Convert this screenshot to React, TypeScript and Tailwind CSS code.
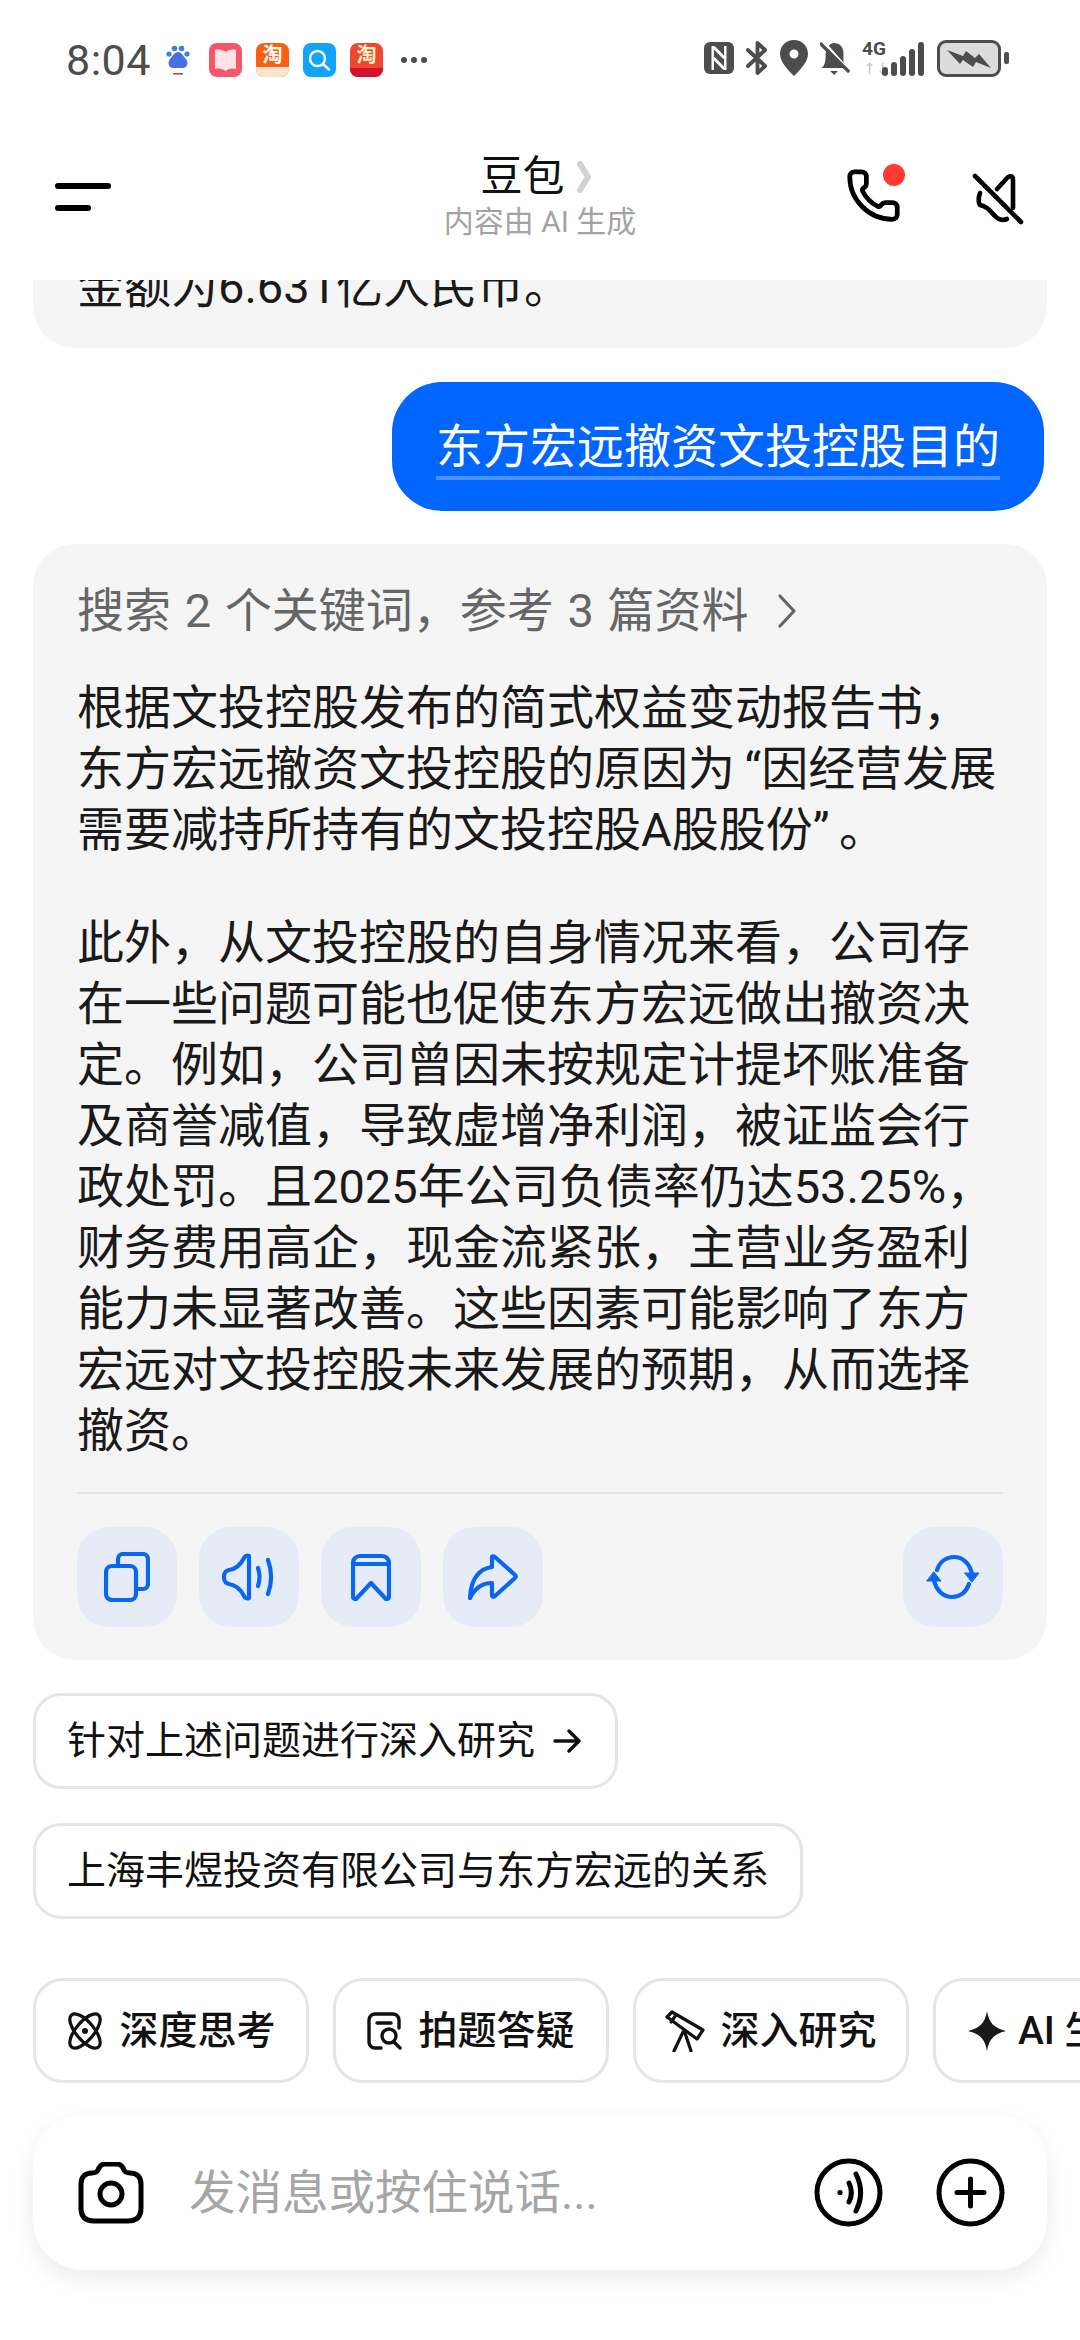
import { Phone } from "lucide-react";

const lines1 = [
	"根据文投控股发布的简式权益变动报告书，",
	"东方宏远撤资文投控股的原因为\u2009“因经营发展",
	"需要减持所持有的文投控股A股股份”\u2009。",
];

const lines2 = [
	"此外，从文投控股的自身情况来看，公司存",
	"在一些问题可能也促使东方宏远做出撤资决",
	"定。例如，公司曾因未按规定计提坏账准备",
	"及商誉减值，导致虚增净利润，被证监会行",
	"政处罚。且2025年公司负债率仍达53.25%，",
	"财务费用高企，现金流紧张，主营业务盈利",
	"能力未显著改善。这些因素可能影响了东方",
	"宏远对文投控股未来发展的预期，从而选择",
	"撤资。",
];

function StatusBar() {
	return (
		<div className="h-[120px] shrink-0 flex items-start justify-between pl-[66px] pr-[71px] pt-[38px] text-[#4d4d4d]">
			<div className="flex items-center h-[44px]">
				<span className="text-[43px] leading-[44px] tracking-[0.5px] font-normal">8:04</span>
				<svg width="24" height="30" viewBox="0 0 24 30" className="ml-[15px]">
					<circle cx="3" cy="9" r="2.6" fill="#3b7de8" />
					<circle cx="8.5" cy="3.5" r="2.8" fill="#3b7de8" />
					<circle cx="15.5" cy="3.5" r="2.8" fill="#3b7de8" />
					<circle cx="21" cy="9" r="2.6" fill="#3b7de8" />
					<path d="M12 7c4 0 5 4 8 7 3 4 1 9-3 9H7c-4 0-6-5-3-9 3-3 4-7 8-7z" fill="#4a6fe0" />
					<rect x="7" y="28" width="10" height="1.6" fill="#c0455a" />
				</svg>
				<div className="ml-[19px] w-[33px] h-[34px] rounded-[8px] bg-[#f4566a] flex items-center justify-center">
					<svg width="23" height="24" viewBox="0 0 23 24">
						<path d="M1 2c4-1 8 0 10.5 2C14 2 18 1 22 2v19c-4-1-8 0-10.5 2C9 21 5 20 1 21z" fill="#fde4e6" />
					</svg>
				</div>
				<div className="ml-[14px] w-[33px] h-[34px] rounded-[8px] bg-[#f9600f] overflow-hidden flex flex-col items-center">
					<span className="text-[20px] leading-[24px] font-bold text-white">淘</span>
					<div className="w-full flex-1 bg-[#fde3cf]" />
				</div>
				<div className="ml-[14px] w-[33px] h-[34px] rounded-[8px] bg-[#11a4fb] flex items-center justify-center">
					<svg width="24" height="24" viewBox="0 0 24 24" fill="none" stroke="#fff" strokeWidth="2.4">
						<circle cx="10.5" cy="10.5" r="7.5" />
						<path d="M16 16l6 5.5" strokeLinecap="round" />
					</svg>
				</div>
				<div className="ml-[14px] w-[33px] h-[34px] rounded-[8px] bg-[#f0482f] overflow-hidden flex flex-col items-center">
					<span className="text-[20px] leading-[25px] font-bold text-[#fff3c8]">淘</span>
					<div className="w-full flex-1 bg-[#d4122f]" />
				</div>
				<div className="ml-[18px] flex gap-[4px]">
					<div className="w-[6px] h-[6px] rounded-full bg-[#4d4d4d]" />
					<div className="w-[6px] h-[6px] rounded-full bg-[#4d4d4d]" />
					<div className="w-[6px] h-[6px] rounded-full bg-[#4d4d4d]" />
				</div>
			</div>
			<div className="flex items-center h-[44px] mt-[-2px]">
				<svg width="30" height="34" viewBox="0 0 31 34" preserveAspectRatio="none">
					<rect x="0" y="1" width="31" height="32" rx="6" fill="#4d4d4d" />
					<path d="M9 5v24M22 5v24" stroke="#fff" strokeWidth="2.5" />
					<path d="M10 6l11 11M10 17l11 11" stroke="#fff" strokeWidth="3" />
				</svg>
				<svg width="22" height="36" viewBox="0 0 23 36" fill="none" stroke="#4d4d4d" strokeWidth="4" preserveAspectRatio="none" className="ml-[12px]">
					<path d="M2 10l18 16-8 7V3l8 7L2 26" strokeLinejoin="round" strokeLinecap="round" />
				</svg>
				<svg width="28" height="36" viewBox="0 0 28 36" className="ml-[12px]">
					<path fillRule="evenodd" d="M14 0c8 0 14 6 14 14 0 8-8 16-14 22C8 30 0 22 0 14 0 6 6 0 14 0zm0 9.5a4.5 4.5 0 100 9 4.5 4.5 0 000-9z" fill="#4d4d4d" />
				</svg>
				<svg width="30" height="34" viewBox="0 0 32 34" preserveAspectRatio="none" className="ml-[12px]">
					<path d="M15 2c6 0 10 4 10 10v9l4 6H2c3-3 4-6 4-13 0-7 4-12 9-12z" fill="#4d4d4d" />
					<path d="M11 30h8l-4 4z" fill="#4d4d4d" />
					<path d="M3 0l27 29" stroke="#fff" strokeWidth="3" />
					<path d="M1 3l29 27" stroke="#4d4d4d" strokeWidth="3.5" strokeLinecap="round" />
				</svg>
				<div className="relative ml-[12px] w-[62px] h-[36px]">
					<span className="absolute left-0 top-[-1px] text-[19px] leading-[20px] font-bold">4G</span>
					<span className="absolute left-[1px] top-[22px] text-[13px] leading-[14px] text-[#c8c8c8] font-bold">↑↓</span>
					<div className="absolute right-0 bottom-0 flex items-end gap-[3px]">
						<div className="w-[6px] h-[9px] rounded-[3px] bg-[#4d4d4d]" />
						<div className="w-[6px] h-[14px] rounded-[3px] bg-[#4d4d4d]" />
						<div className="w-[6px] h-[20px] rounded-[3px] bg-[#4d4d4d]" />
						<div className="w-[6px] h-[27px] rounded-[3px] bg-[#4d4d4d]" />
						<div className="w-[6px] h-[34px] rounded-[3px] bg-[#4d4d4d]" />
					</div>
				</div>
				<div className="ml-[13px] w-[64px] h-[37px] rounded-[9px] border-[3px] border-[#4d4d4d] bg-[#dcdcdc] flex items-center justify-center">
					<svg width="46" height="22" viewBox="0 0 46 22">
						<path d="M1 3l16 6 3-5 9 7 4-4 12 14-15-6-3 5-10-7-3 4z" fill="#4d4d4d" />
					</svg>
				</div>
				<div className="ml-[3px] w-[5px] h-[12px] rounded-[2px] bg-[#4d4d4d]" />
			</div>
		</div>
	);
}

function NavBar() {
	return (
		<div className="relative h-[160px] shrink-0 flex items-start justify-between pl-[55px] pr-[56px]">
			<div className="pt-[63px] flex flex-col gap-[16px]">
				<div className="w-[56px] h-[6px] rounded-full bg-black" />
				<div className="w-[36px] h-[6px] rounded-full bg-black" />
			</div>
			<div className="absolute left-0 right-0 top-[31px] flex flex-col items-center">
				<div className="flex items-center mr-[8px]">
					<span className="text-[42px] leading-[52px] text-[#111]">豆包</span>
					<svg width="16" height="34" viewBox="0 0 16 34" fill="none" stroke="#d2d2d2" strokeWidth="6" strokeLinecap="round" strokeLinejoin="round" className="ml-[11px]">
						<path d="M4 4l8 13-8 13" />
					</svg>
				</div>
				<span className="text-[30px] leading-[38px] text-[#a3a3a3]">内容由 AI 生成</span>
			</div>
			<div className="flex items-start gap-[70px] pt-[47px]">
				<div className="relative">
					<Phone size={57} strokeWidth={2} color="#000" />
					<div className="absolute right-[-3px] top-[-3px] w-[22px] h-[22px] rounded-full bg-[#ff3b30]" />
				</div>
				<svg width="52" height="52" viewBox="0 0 52 52" fill="none" stroke="#000" strokeWidth="4.6" strokeLinecap="round" strokeLinejoin="round" className="mt-[6px]">
					<path d="M3 3l46 46" />
					<path d="M25 16l11-12c4-2 5 0 5 3v28" />
					<path d="M8 20c-1 3-2 9 0 12 6 1 9 4 13 9 5 6 9 7 14 5" />
				</svg>
			</div>
		</div>
	);
}

function ActionButton({ children }: { children: React.ReactNode }) {
	return (
		<div className="w-[100px] h-[100px] rounded-[32px] bg-[#e5ecf7] flex items-center justify-center">
			{children}
		</div>
	);
}

function AnswerCard() {
	return (
		<div className="mx-[33px] mt-[33px] rounded-[42px] bg-[#f5f5f5] pt-[37px] pb-[33px] px-[44px]">
			<div className="flex items-center h-[60px] text-[47px] text-[#666]">
				<span className="whitespace-pre [word-spacing:2px]">搜索 2 个关键词，参考 3 篇资料</span>
				<svg width="20" height="36" viewBox="0 0 20 36" fill="none" stroke="#666" strokeWidth="3.2" strokeLinecap="round" strokeLinejoin="round" className="ml-[29px]">
					<path d="M3 3l14 15L3 33" />
				</svg>
			</div>
			<div className="mt-[36px] text-[47px] leading-[61px] text-[#1a1a1a]">
				{lines1.map((line) => (
					<div key={line} className="whitespace-nowrap">{line}</div>
				))}
				<div className="h-[52px]" />
				{lines2.map((line) => (
					<div key={line} className="whitespace-nowrap">{line}</div>
				))}
			</div>
			<div className="mt-[31px] h-[2px] bg-[#e2e2e2]" />
			<div className="mt-[33px] flex justify-between">
				<div className="flex gap-[22px]">
					<ActionButton>
						<svg width="46" height="50" viewBox="0 0 46 50" fill="none" stroke="#0a66f0" strokeWidth="4.2" strokeLinejoin="round">
							<rect x="2" y="14" width="30" height="34" rx="6" />
							<path d="M14 13V7a5 5 0 015-5h20a5 5 0 015 5v25a5 5 0 01-5 5h-7" />
						</svg>
					</ActionButton>
					<ActionButton>
						<svg width="54" height="48" viewBox="0 0 54 48" fill="none" stroke="#0a66f0" strokeWidth="4.2" strokeLinejoin="round" strokeLinecap="round">
							<path d="M27 3v42c-2 1-4 0-5-2-3-6-8-11-15-12-4-1-5-3-5-7s1-6 5-7c7-1 12-6 15-12 1-2 3-3 5-2z" />
							<path d="M36 15c2 6 2 12 0 18" />
							<path d="M46 7c4 11 4 23 0 34" />
						</svg>
					</ActionButton>
					<ActionButton>
						<svg width="40" height="48" viewBox="0 0 40 48" fill="none" stroke="#0a66f0" strokeWidth="4.2" strokeLinejoin="round" strokeLinecap="round">
							<path d="M2 10a7 7 0 017-7h22a7 7 0 017 7v34c0 2-3 3-4 1L20 30 6 45c-1 2-4 1-4-1z" />
							<path d="M3 11h34" />
						</svg>
					</ActionButton>
					<ActionButton>
						<svg width="50" height="46" viewBox="0 0 50 46" fill="none" stroke="#0a66f0" strokeWidth="4.2" strokeLinejoin="round" strokeLinecap="round">
							<path d="M24 3v10C10 15 3 26 2 44c5-10 12-15 22-15v12c0 2 2 2 3 1l20-18c1-1 1-2 0-3L27 3c-1-1-3-1-3 0z" />
						</svg>
					</ActionButton>
				</div>
				<ActionButton>
					<svg width="56" height="46" viewBox="0 0 56 46" fill="none" stroke="#0a66f0" strokeWidth="4.2" strokeLinecap="round">
						<path d="M12 16C15 7 22 3 29 3c9 0 16 7 18 17" />
						<path d="M44 30c-3 9-10 13-17 13-9 0-16-7-18-17" />
						<path d="M40 19h14l-7 9z" fill="#0a66f0" strokeWidth="1" strokeLinejoin="round" />
						<path d="M2 27h14l-7-9z" fill="#0a66f0" strokeWidth="1" strokeLinejoin="round" />
					</svg>
				</ActionButton>
			</div>
		</div>
	);
}

function Suggestion({ text, arrow }: { text: string; arrow?: boolean }) {
	return (
		<div className="self-start h-[96px] rounded-[28px] border-[3px] border-[#e5e5e5] pl-[31px] pr-[31px] flex items-center text-[39px] text-[#111]">
			<span>{text}</span>
			{arrow && (
				<svg width="28" height="26" viewBox="0 0 28 26" fill="none" stroke="#111" strokeWidth="3.4" strokeLinecap="round" strokeLinejoin="round" className="ml-[18px] mr-[3px]">
					<path d="M2 13h24M16 3l10 10-10 10" />
				</svg>
			)}
		</div>
	);
}

function ToolChip({ icon, label }: { icon: React.ReactNode; label: string }) {
	return (
		<div className="shrink-0 w-[276px] h-[105px] rounded-[30px] border-[3px] border-[#e5e5e5] flex items-center justify-center gap-[15px] text-[39px] font-medium text-[#111]">
			{icon}
			<span className="whitespace-nowrap mt-[2px]">{label}</span>
		</div>
	);
}

export default function App() {
	return (
		<div className="w-[1080px] h-[2340px] bg-white overflow-hidden flex flex-col font-['Roboto','Noto_Sans_CJK_SC',sans-serif]">
			<StatusBar />
			<NavBar />

			{/* top of this card is scrolled under the header */}
			<div className="mx-[33px] h-[68px] shrink-0 rounded-b-[42px] bg-[#f5f5f5] overflow-hidden pl-[44px]">
				<div className="mt-[-24px] text-[47px] leading-[61px] text-[#1a1a1a] whitespace-nowrap">金额为6.631亿人民币。</div>
			</div>

			<div className="mt-[34px] mr-[36px] self-end h-[129px] w-[652px] rounded-[50px] bg-[#0066ff] flex items-center justify-center">
				<span className="mt-[4px] text-[47px] leading-[58px] text-white border-b-[4px] border-[#4d90ff]">东方宏远撤资文投控股目的</span>
			</div>

			<AnswerCard />

			<div className="mx-[33px] mt-[33px] flex flex-col gap-[34px]">
				<Suggestion text="针对上述问题进行深入研究" arrow />
				<Suggestion text="上海丰煜投资有限公司与东方宏远的关系" />
			</div>

			<div className="mt-[59px] pl-[33px] flex gap-[24px] overflow-hidden">
				<ToolChip
					label="深度思考"
					icon={
						<svg width="38" height="38" viewBox="0 0 38 38" fill="none" stroke="#111" strokeWidth="3.2">
							<ellipse cx="19" cy="19" rx="9" ry="21" transform="rotate(-40 19 19)" />
							<ellipse cx="19" cy="19" rx="9" ry="21" transform="rotate(40 19 19)" />
							<circle cx="19" cy="19" r="3" fill="#111" stroke="none" />
						</svg>
					}
				/>
				<ToolChip
					label="拍题答疑"
					icon={
						<svg width="36" height="38" viewBox="0 0 36 38" fill="none" stroke="#111" strokeWidth="3.4" strokeLinecap="round" strokeLinejoin="round">
							<path d="M14 36H8a6 6 0 01-6-6V8a6 6 0 016-6h18a6 6 0 016 6v8" />
							<path d="M10 11h14" />
							<circle cx="22" cy="24" r="7" />
							<path d="M27 30l6 6" />
						</svg>
					}
				/>
				<ToolChip
					label="深入研究"
					icon={
						<svg width="40" height="42" viewBox="0 0 40 42" fill="none" stroke="#111" strokeWidth="3.2" strokeLinecap="round" strokeLinejoin="round">
							<path d="M2 7l5-5 31 18-6 9z" />
							<path d="M11 5L6 12" />
							<path d="M18 22L9 41M20 23l6 18" />
						</svg>
					}
				/>
				<div className="shrink-0 h-[105px] rounded-[30px] border-[3px] border-[#e5e5e5] px-[32px] flex items-center gap-[12px] text-[39px] font-medium text-[#111]">
					<svg width="38" height="40" viewBox="0 0 38 40">
						<path d="M19 0c2 12 7 17 19 20-12 3-17 8-19 20-2-12-7-17-19-20 12-3 17-8 19-20z" fill="#1a1a1a" />
					</svg>
					<span className="whitespace-nowrap mt-[2px]">AI 生成图片</span>
				</div>
			</div>

			<div className="mx-[33px] mt-[32px] h-[155px] shrink-0 rounded-[50px] bg-white shadow-[0_8px_24px_rgba(0,0,0,0.08)] flex items-center pl-[45px] pr-[42px]">
				<svg width="66" height="62" viewBox="0 0 66 62" fill="none" stroke="#000" strokeWidth="5" strokeLinejoin="round">
					<path d="M20 8c2-5 4-6 7-6h12c3 0 5 1 7 6 1 2 3 3 6 3 7 0 11 4 11 11v24c0 9-5 13-13 13H16C8 59 3 55 3 46V22c0-7 4-11 11-11 3 0 5-1 6-3z" />
					<circle cx="33" cy="32" r="11" />
				</svg>
				<span className="ml-[45px] mt-[3px] flex-1 text-[46.5px] text-[#a6a6a6]">发消息或按住说话...</span>
				<div className="flex gap-[53px]">
					<svg width="69" height="69" viewBox="0 0 69 69" fill="none" stroke="#000" strokeWidth="5" strokeLinecap="round">
						<circle cx="34.5" cy="34.5" r="31.5" />
						<circle cx="26" cy="34.5" r="2.6" fill="#000" stroke="none" />
						<path d="M35 25c3 6 3 13 0 19" />
						<path d="M42 16c6 12 6 25 0 37" />
					</svg>
					<svg width="69" height="69" viewBox="0 0 69 69" fill="none" stroke="#000" strokeWidth="5" strokeLinecap="round">
						<circle cx="34.5" cy="34.5" r="31.5" />
						<path d="M34.5 21v27M21 34.5h27" />
					</svg>
				</div>
			</div>
		</div>
	);
}
